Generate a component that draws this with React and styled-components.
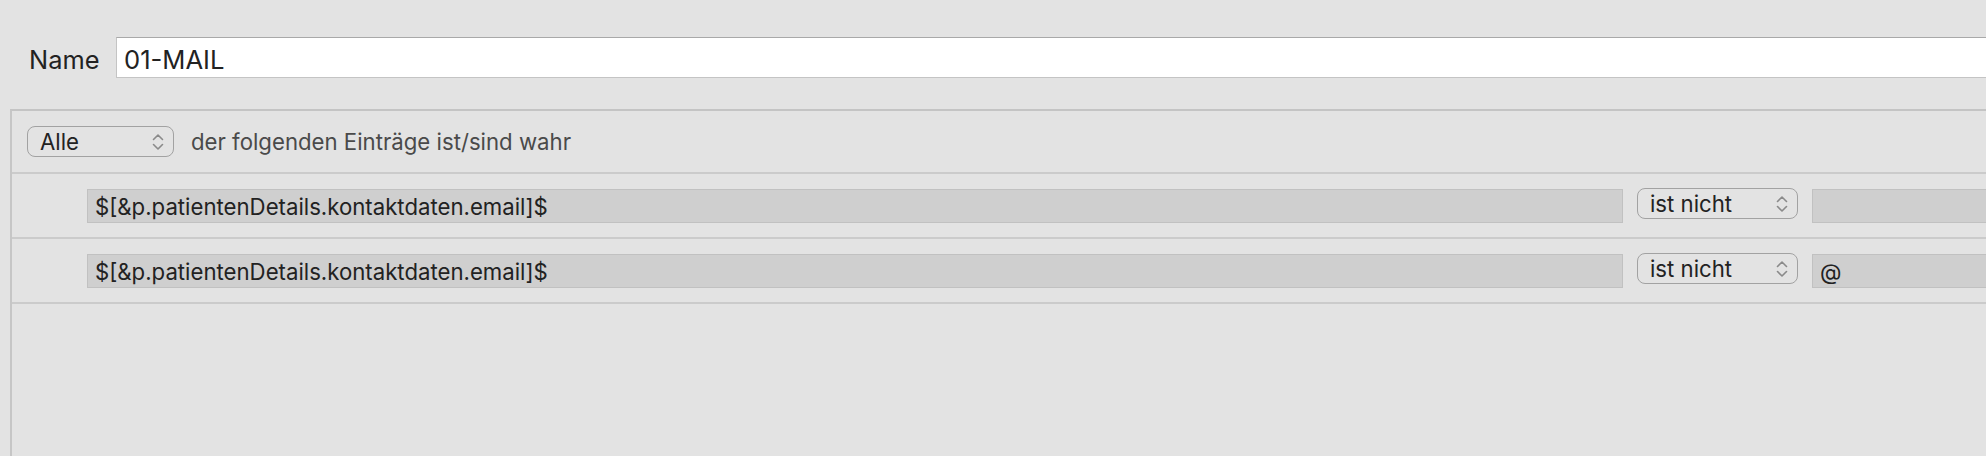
import React from 'react';
import styled, { createGlobalStyle } from 'styled-components';

const GlobalStyle = createGlobalStyle`
    html, body {
        margin: 0;
        padding: 0;
        background: #e3e3e3;
        overflow: hidden;
    }
    body {
        font-family: Inter, "Liberation Sans", Arial, sans-serif;
        color: #222222;
    }
`;

const Page = styled.div`
    width: 1986px;
    height: 456px;
    overflow: hidden;
    background: #e3e3e3;
`;

const NameRow = styled.div`
    display: flex;
    align-items: center;
    padding: 37px 0 0 29px;
    height: 41px;
`;

const NameLabel = styled.label`
    font-size: 25.4px;
    color: #222222;
    width: 87px;
    flex: none;
    padding-top: 3px;
`;

const NameInput = styled.div`
    flex: 1;
    height: 41px;
    margin-right: -20px;
    background: #ffffff;
    border: 1px solid #c4c4c4;
    border-top-color: #a9a9a9;
    display: flex;
    align-items: center;
    padding: 3px 0 0 7px;
    box-sizing: border-box;
    font-size: 25.6px;
    color: #222222;
`;

const Panel = styled.section`
    margin: 31px -20px 0 10px;
    border-left: 2px solid #c6c6c6;
    border-top: 2px solid #c4c4c4;
    height: 400px;
`;

const Header = styled.div`
    display: flex;
    align-items: center;
    height: 61px;
    padding-left: 15px;
    border-bottom: 2px solid #cbcbcb;
    font-size: 22.2px;
`;

const Popup = styled.div`
    box-sizing: border-box;
    flex: none;
    width: ${p => p.$width}px;
    height: 31px;
    border: 1.5px solid #a2a2a2;
    border-radius: 8px;
    display: flex;
    align-items: center;
    justify-content: space-between;
    padding: 0 8px 0 12px;
    color: #222222;
    font-size: 22.2px;
    margin-top: ${p => p.$offset || 0}px;
`;

const Chevrons = styled.svg`
    width: 14px;
    height: 20px;
    flex: none;
`;

const HeaderText = styled.span`
    margin-left: 17px;
    color: #4a4a4a;
`;

const Row = styled.div`
    display: flex;
    align-items: center;
    height: 63px;
    padding-left: 75px;
    border-bottom: 2px solid #cbcbcb;
    font-size: 22.2px;
`;

const Field = styled.div`
    box-sizing: border-box;
    flex: ${p => (p.$grow ? 1 : 'none')};
    width: ${p => (p.$width ? `${p.$width}px` : 'auto')};
    height: 34px;
    background: #cfcfcf;
    border: 1px solid #c1c1c1;
    display: flex;
    align-items: center;
    padding: 2px 0 0 7px;
    color: #222222;
    margin-left: ${p => p.$left || 0}px;
`;

const Selector = () => (
    <Chevrons viewBox="0 0 14 20">
        <path d="M2.5 7.5 L7 3 L11.5 7.5" fill="none" stroke="#8a8a8a" strokeWidth="1.6" strokeLinecap="round" strokeLinejoin="round" />
        <path d="M2.5 12.5 L7 17 L11.5 12.5" fill="none" stroke="#8a8a8a" strokeWidth="1.6" strokeLinecap="round" strokeLinejoin="round" />
    </Chevrons>
);

const rules = [
    { field: '$[&p.patientenDetails.kontaktdaten.email]$', op: 'ist nicht', value: '' },
    { field: '$[&p.patientenDetails.kontaktdaten.email]$', op: 'ist nicht', value: '@' },
];

export default function App() {
    return (
        <Page>
            <GlobalStyle />
            <NameRow>
                <NameLabel>Name</NameLabel>
                <NameInput>01-MAIL</NameInput>
            </NameRow>
            <Panel>
                <Header>
                    <Popup $width={147}>
                        <span>Alle</span>
                        <Selector />
                    </Popup>
                    <HeaderText>der folgenden Einträge ist/sind wahr</HeaderText>
                </Header>
                {rules.map((r, i) => (
                    <Row key={i}>
                        <Field $width={1536}>{r.field}</Field>
                        <Popup $width={161} $offset={-4} style={{ marginLeft: 14 }}>
                            <span>{r.op}</span>
                            <Selector />
                        </Popup>
                        <Field $grow $left={14}>{r.value}</Field>
                    </Row>
                ))}
            </Panel>
        </Page>
    );
}
